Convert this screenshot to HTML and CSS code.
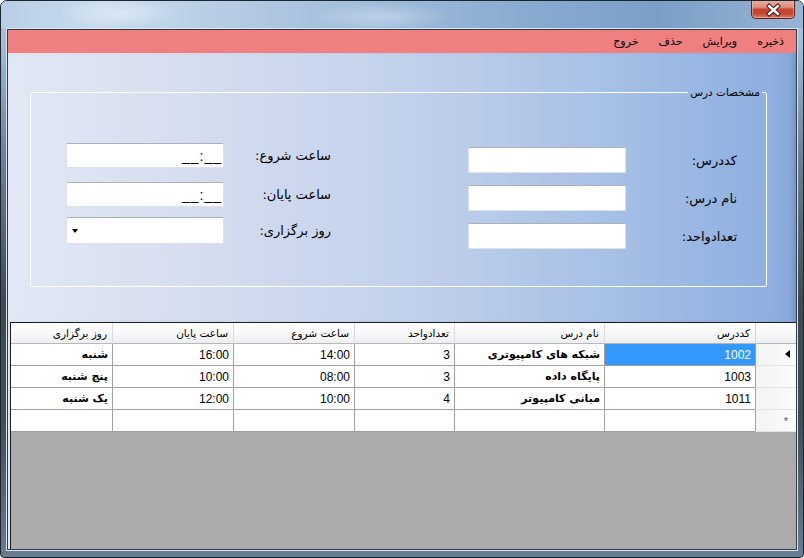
FILE: index.html
```html
<!DOCTYPE html>
<html lang="fa">
<head>
<meta charset="utf-8">
<link rel="stylesheet" href="styles.css">
</head>
<body>
<div class="window">
  <div class="titlebar">
    <div class="close">
      <svg width="44" height="19" viewBox="0 0 44 19">
        <path d="M18 6 L27 14 M27 6 L18 14" stroke="#3b1f1a" stroke-width="4.6" stroke-linecap="square" fill="none"/>
        <path d="M18 6 L27 14 M27 6 L18 14" stroke="#ffffff" stroke-width="2.6" stroke-linecap="square" fill="none"/>
      </svg>
    </div>
  </div>
  <div class="frame">
    <div class="client">
      <div class="client-in" dir="rtl">
        <div class="menu">
          <span class="mi">ذخیره</span>
          <span class="mi">ویرایش</span>
          <span class="mi">حذف</span>
          <span class="mi">خروج</span>
        </div>
        <div class="form">
          <fieldset class="group">
            <legend class="gtitle">مشخصات درس</legend>
            <div class="cols">
              <div class="col col-a">
                <div class="row"><span class="lbl">کددرس:</span><span class="tb"></span></div>
                <div class="row"><span class="lbl">نام درس:</span><span class="tb"></span></div>
                <div class="row"><span class="lbl">تعدادواحد:</span><span class="tb"></span></div>
              </div>
              <div class="col col-b">
                <div class="row"><span class="lbl">ساعت شروع:</span><span class="tb mtb"><span class="mask">__:__</span></span></div>
                <div class="row row-2"><span class="lbl">ساعت پایان:</span><span class="tb mtb"><span class="mask">__:__</span></span></div>
                <div class="row row-3"><span class="lbl">روز برگزاری:</span><span class="tb combo"><span class="arrow"></span></span></div>
              </div>
            </div>
          </fieldset>
        </div>
        <div class="grid">
          <table class="dgv">
            <colgroup>
              <col class="w-rh"><col class="w-code"><col class="w-name"><col class="w-unit"><col class="w-start"><col class="w-end"><col class="w-day">
            </colgroup>
            <thead>
              <tr>
                <th class="corner"></th>
                <th>کددرس</th>
                <th>نام درس</th>
                <th>تعدادواحد</th>
                <th>ساعت شروع</th>
                <th>ساعت پایان</th>
                <th class="last">روز برگزاری</th>
              </tr>
            </thead>
            <tbody>
              <tr>
                <td class="rh"><span class="cur"></span></td>
                <td class="num sel">1002</td>
                <td class="fa">شبکه های کامپیوتری</td>
                <td class="num">3</td>
                <td class="num">14:00</td>
                <td class="num">16:00</td>
                <td class="fa last">شنبه</td>
              </tr>
              <tr>
                <td class="rh"></td>
                <td class="num">1003</td>
                <td class="fa">پایگاه داده</td>
                <td class="num">3</td>
                <td class="num">08:00</td>
                <td class="num">10:00</td>
                <td class="fa last">پنج شنبه</td>
              </tr>
              <tr>
                <td class="rh"></td>
                <td class="num">1011</td>
                <td class="fa">مبانی کامپیوتر</td>
                <td class="num">4</td>
                <td class="num">10:00</td>
                <td class="num">12:00</td>
                <td class="fa last">یک شنبه</td>
              </tr>
              <tr>
                <td class="rh"><span class="star">*</span></td>
                <td></td><td></td><td></td><td></td><td></td><td class="last"></td>
              </tr>
            </tbody>
          </table>
        </div>
      </div>
    </div>
  </div>
</div>
</body>
</html>
```
FILE: styles.css
```css
* { box-sizing: border-box; }
html, body { margin: 0; padding: 0; }
body {
  width: 804px; height: 558px; overflow: hidden; background: #ffffff;
  font-family: "DejaVu Sans", sans-serif; color: #000;
}
.window {
  width: 804px; height: 558px;
  border: 1px solid #1c2630;
  border-radius: 7px 7px 4px 4px;
  overflow: hidden;
  display: flex; flex-direction: column;
  background: linear-gradient(to bottom, #b4cbe3 0px, #a3bdd9 40px, #71889e 140px, #3d4b50 300px, #3f4d57 420px, #687e93 557px);
}
.titlebar {
  height: 27px; flex: none;
  display: flex; justify-content: flex-end;
  padding-right: 8px;
  background:
    radial-gradient(ellipse 60px 14px at 120px 12px, rgba(235,243,250,0.55), rgba(235,243,250,0) 100%),
    radial-gradient(ellipse 70px 14px at 380px 16px, rgba(225,236,248,0.45), rgba(225,236,248,0) 100%),
    linear-gradient(to right, #b7cee6 0%, #cadcee 12%, #b3cae3 30%, #a1bddb 45%, #8aabd0 65%, #7b9fc6 82%, #97b4d4 100%);
}
.close {
  width: 44px; height: 19px; margin-top: -1px;
  border: 1px solid #5b241b; border-top: none;
  border-radius: 0 0 5px 5px;
  background: linear-gradient(to bottom, #eab0a2 0%, #dc8f7d 40%, #c6452f 52%, #c54530 75%, #de7a60 100%);
  box-shadow: inset 0 0 0 1px rgba(255,210,200,0.45);
  display: flex;
}
.close svg { display: block; }
.frame {
  flex: 1; display: flex;
  padding: 0 5px 6px 5px;
}
.client {
  flex: 1; display: flex;
  border: 1px solid #dbe5ef;
}
.client-in {
  flex: 1; display: flex; flex-direction: column;
  border: 1px solid #2e3a46;
  background: #dfe6f2;
}
.menu {
  height: 23px; flex: none;
  background: #f08080;
  display: flex; align-items: center;
  padding-right: 2px;
  font-size: 11px;
}
.mi { padding: 0 10px; line-height: 16px; }
.form {
  height: 269px; flex: none;
  background: linear-gradient(to right, #e1e7f4 0%, #d4ddef 25%, #c2d1eb 50%, #a8c1e6 75%, #8eafe0 97%, #86a6d6 100%);
  box-shadow: inset -5px 0 5px -3px rgba(70,100,150,0.35);
  padding: 32px 29px 0 22px;
}
.group {
  margin: 0; padding: 0;
  height: 202px;
  border: 1px solid #ffffff;
  border-radius: 2px;
  min-width: 0;
}
.gtitle {
  font-size: 10.5px; line-height: 14px;
  padding: 0 2px; margin-right: 4px;
}
.cols {
  display: flex; justify-content: space-between; align-items: flex-start;
  padding-top: 44px;
}
.col { display: flex; flex-direction: column; }
.col-a { padding-right: 29px; padding-top: 4px; }
.col-b { padding-left: 35px; }
.row { display: flex; align-items: center; }
.col-a .row { height: 26px; }
.col-a .row + .row { margin-top: 12px; }
.col-b .row { height: 25px; }
.col-b .row-2 { margin-top: 14px; }
.col-b .row-3 { margin-top: 10px; height: 27px; }
.lbl { font-size: 13px; white-space: nowrap; }
.col-a .lbl { width: 111px; }
.col-b .lbl { width: 107px; }
.tb {
  width: 158px; height: 100%;
  background: #ffffff;
  border: 1px solid #dde2ea; border-top-color: #acb1b9;
  border-radius: 2px;
  display: flex; align-items: center;
}
.mask {
  font-family: "Liberation Sans", sans-serif; font-size: 14px;
  padding-right: 1px; letter-spacing: 1px;
  direction: ltr; line-height: 14px;
}
.combo { justify-content: flex-end; padding-left: 5px; }
.arrow {
  width: 0; height: 0;
  border-left: 3.5px solid transparent; border-right: 3.5px solid transparent;
  border-top: 4px solid #000;
}
.grid {
  flex: 1;
  margin-left: 2px;
  border-top: 1px solid #1b1b1b;
  border-left: 1px solid #1b1b1b;
  background: #ababab;
}
.dgv {
  table-layout: fixed; width: 785px;
  border-collapse: separate; border-spacing: 0;
  font-size: 11px;
}
.w-rh { width: 41px; }
.w-code { width: 151px; }
.w-name { width: 150px; }
.w-unit { width: 100px; }
.w-start { width: 121px; }
.w-end { width: 121px; }
.w-day { width: 101px; }
.dgv thead tr { height: 21px; }
.dgv tbody tr { height: 22px; }
.dgv th {
  font-weight: normal; font-size: 10.5px; text-align: right;
  padding: 0 5px 0 4px;
  background: linear-gradient(to bottom, #ffffff 0%, #f8f8f9 50%, #eceef0 100%);
  border-left: 1px solid #dadcdf;
  border-bottom: 1px solid #b8b8b8;
  white-space: nowrap; overflow: hidden;
}
.dgv th.corner { border-left: 1px solid #d0d2d5; }
.dgv th.last, .dgv td.last { border-left: none; }
.dgv td {
  background: #ffffff;
  border-left: 1px solid #a0a0a0;
  border-bottom: 1px solid #a0a0a0;
  padding: 0 4px 0 3px;
  text-align: right;
  white-space: nowrap; overflow: hidden;
}
.dgv td.num { font-family: "Liberation Sans", sans-serif; font-size: 12px; }
.dgv td.fa { font-weight: bold; font-size: 11px; }
.dgv td.sel { background: #3399ff; color: #ffffff; }
.dgv td.rh {
  background: linear-gradient(to right, #f4f4f5, #fbfbfb);
  border-left: 1px solid #a0a0a0;
  border-bottom: 1px solid #e4e4e4;
  padding: 0;
  position: relative;
}
.cur {
  position: absolute; right: 6px; top: 6px;
  width: 0; height: 0;
  border-top: 4.5px solid transparent; border-bottom: 4.5px solid transparent;
  border-right: 5px solid #000;
}
.star {
  position: absolute; right: 8px; top: 5px;
  font-family: "Liberation Sans", sans-serif; font-size: 11px; color: #555;
}
```
